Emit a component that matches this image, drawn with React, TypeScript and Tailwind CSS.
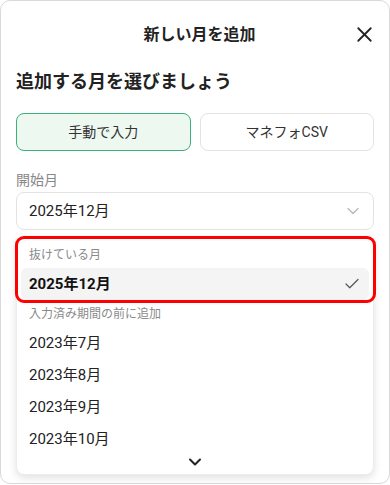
import { X, ChevronDown, Check } from 'lucide-react';

const FONT = { fontFamily: 'Roboto, "Noto Sans CJK JP", sans-serif' };

const BEFORE_MONTHS = ['2023年7月', '2023年8月', '2023年9月', '2023年10月'];

export default function App() {
  return (
    <div className="bg-white p-0" style={FONT}>
      <div className="relative h-[484px] w-[390px] rounded-[10px] border border-[#d9d9d9] bg-white px-[15px]">
        {/* header */}
        <div className="relative flex h-[68px] items-center justify-center pl-[9px]">
          <h1 className="text-[16px] font-semibold text-[#222]">新しい月を追加</h1>
          <button className="absolute right-[-3px] top-[21px] text-[#222]">
            <X size={25} strokeWidth={1.7} />
          </button>
        </div>

        <h2 className="text-[18px] font-bold leading-[26px] text-[#222]">追加する月を選びましょう</h2>

        <div className="mt-[18px] grid grid-cols-2 gap-[9px]">
          <button className="h-[38px] rounded-[8px] border border-[#3cb07a] bg-[#edf8f1] text-[14px] text-[#333]">
            手動で入力
          </button>
          <button className="h-[38px] rounded-[8px] border border-[#e3e3e3] bg-white text-[14px] text-[#333]">
            マネフォCSV
          </button>
        </div>

        <p className="mt-[19px] text-[14px] leading-[20px] text-[#888]">開始月</p>

        <div className="mt-[2px] flex h-[38px] items-center justify-between rounded-[8px] border border-[#e3e3e3] pl-[12px] pr-[10px]">
          <span className="text-[15px] text-[#222]">2025年12月</span>
          <ChevronDown size={20} strokeWidth={1.6} className="text-[#b8b8b8]" />
        </div>

        {/* dropdown */}
        <div className="relative mt-[6px] rounded-[8px] border border-[#ececec] bg-white p-[4px] shadow-[0_3px_8px_rgba(0,0,0,0.12)]">
          <div className="px-[8px] pb-[5px] pt-[6px] text-[12px] leading-[16px] text-[#8a8a8a]">抜けている月</div>
          <div className="flex h-[32px] items-center justify-between rounded-[6px] bg-[#f4f4f4] pl-[8px] pr-[8px]">
            <span className="text-[15px] font-bold text-[#111]">2025年12月</span>
            <Check size={18} strokeWidth={1.6} className="text-[#555]" />
          </div>
          <div className="px-[8px] pb-[5px] pt-[6px] text-[12px] leading-[16px] text-[#8a8a8a]">入力済み期間の前に追加</div>
          {BEFORE_MONTHS.map((m) => (
            <div key={m} className="flex h-[32px] items-center pl-[8px] text-[15px] text-[#222]">
              {m}
            </div>
          ))}
          <div className="flex h-[14px] items-center justify-center">
            <ChevronDown size={20} strokeWidth={2.4} className="text-[#222]" />
          </div>
          <div className="h-[1px]" />

          {/* annotation highlight */}
          <div className="pointer-events-none absolute left-[-2px] right-[-3px] top-[-1px] h-[67px] rounded-[9px] border-[3px] border-[#ff0000]" />
        </div>
      </div>
    </div>
  );
}
